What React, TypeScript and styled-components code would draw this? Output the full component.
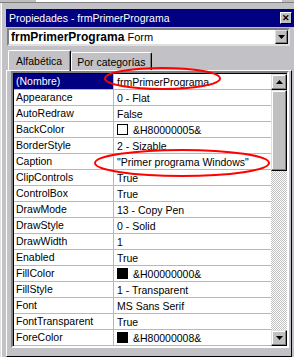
import React from "react";
import styled, { createGlobalStyle } from "styled-components";

type Prop = {
    name: string;
    value: string;
    swatch?: "white" | "black";
    selected?: boolean;
};

const props: Prop[] = [
    { name: "(Nombre)", value: "frmPrimerPrograma", selected: true },
    { name: "Appearance", value: "0 - Flat" },
    { name: "AutoRedraw", value: "False" },
    { name: "BackColor", value: "&H80000005&", swatch: "white" },
    { name: "BorderStyle", value: "2 - Sizable" },
    { name: "Caption", value: "\"Primer programa Windows\"" },
    { name: "ClipControls", value: "True" },
    { name: "ControlBox", value: "True" },
    { name: "DrawMode", value: "13 - Copy Pen" },
    { name: "DrawStyle", value: "0 - Solid" },
    { name: "DrawWidth", value: "1" },
    { name: "Enabled", value: "True" },
    { name: "FillColor", value: "&H00000000&", swatch: "black" },
    { name: "FillStyle", value: "1 - Transparent" },
    { name: "Font", value: "MS Sans Serif" },
    { name: "FontTransparent", value: "True" },
    { name: "ForeColor", value: "&H80000008&", swatch: "black" },
];

const Arrow = ({ up }: { up?: boolean }) => (
    <svg width="7" height="4" viewBox="0 0 7 4">
        <polygon points={up ? "3.5,0 7,4 0,4" : "0,0 7,0 3.5,4"} fill="#000" />
    </svg>
);

export default function App() {
    return (
        <>
            <GlobalStyle />
            <Screen>
                <TopStrip />
                <Frame>
                    <TitleBar>
                        <span>Propiedades - frmPrimerPrograma</span>
                        <CloseButton>✕</CloseButton>
                    </TitleBar>
                    <Combo>
                        <ComboText>
                            <b>frmPrimerPrograma</b> Form
                        </ComboText>
                        <SmallButton>
                            <Arrow />
                        </SmallButton>
                    </Combo>
                    <TabStrip>
                        <Tab $active>Alfabética</Tab>
                        <Tab>Por categorías</Tab>
                    </TabStrip>
                    <Panel>
                        <Grid>
                            <Rows>
                                {props.map((p) => (
                                    <Row key={p.name}>
                                        <NameCell $selected={p.selected}>{p.name}</NameCell>
                                        <ValueCell>
                                            {p.swatch && <Swatch $color={p.swatch} />}
                                            {p.value}
                                        </ValueCell>
                                    </Row>
                                ))}
                            </Rows>
                            <ScrollBar>
                                <ScrollButton>
                                    <Arrow up />
                                </ScrollButton>
                                <Thumb />
                                <Track />
                                <ScrollButton>
                                    <Arrow />
                                </ScrollButton>
                            </ScrollBar>
                        </Grid>
                    </Panel>
                </Frame>
                <Marks width="294" height="357" viewBox="0 0 294 357">
                    <ellipse cx="162.5" cy="78.5" rx="57.5" ry="10.5" fill="none" stroke="#ff0000" strokeWidth="2" />
                    <ellipse cx="182" cy="163" rx="87" ry="13" fill="none" stroke="#ff0000" strokeWidth="2" />
                </Marks>
            </Screen>
        </>
    );
}

const GlobalStyle = createGlobalStyle`
  body {
    margin: 0;
    background: #c0c0c0;
    font-family: "Liberation Sans", Arial, sans-serif;
  }
`;

const Screen = styled.div`
  position: relative;
  width: 294px;
  height: 357px;
  overflow: hidden;
  background: #c2c2c6;
`;

const TopStrip = styled.div`
  height: 3px;
  background: linear-gradient(to right, #c0c0c0 0 36px, #ffffff 36px 282px, #c0c0c0 282px);
  border-bottom: 1px solid #808080;
  box-sizing: border-box;
`;

const Frame = styled.div`
  display: flex;
  flex-direction: column;
  height: 354px;
  box-sizing: border-box;
  padding: 6px 0 0 5px;
  border-left: 1px solid #dfdfdf;
  box-shadow: inset 1px 0 0 #ffffff;
`;

const TitleBar = styled.div`
  display: flex;
  align-items: center;
  justify-content: space-between;
  height: 18px;
  padding: 0 2px 0 3px;
  background: #000080;
  color: #ffffff;
  font-size: 10.5px;
`;

const CloseButton = styled.div`
  display: flex;
  align-items: center;
  justify-content: center;
  width: 12px;
  height: 12px;
  background: #c0c0c0;
  color: #000;
  font-size: 9px;
  font-weight: bold;
  border: 1px solid;
  border-color: #ffffff #000000 #000000 #ffffff;
  box-sizing: border-box;
`;

const Combo = styled.div`
  display: flex;
  align-items: center;
  justify-content: space-between;
  margin: 1px 4px 0 1px;
  height: 18px;
  box-sizing: border-box;
  background: #ffffff;
  border: 2px solid;
  border-color: #808080 #dfdfdf #dfdfdf #808080;
  padding: 0 0 0 2px;
`;

const ComboText = styled.div`
  font-size: 11px;
  color: #000;

  b {
    font-size: 12px;
  }
`;

const SmallButton = styled.div`
  display: flex;
  align-items: center;
  justify-content: center;
  width: 13px;
  height: 14px;
  box-sizing: border-box;
  background: #c0c0c0;
  border: 1px solid;
  border-color: #dfdfdf #000000 #000000 #dfdfdf;
  box-shadow: inset -1px -1px 0 #808080;
`;

const TabStrip = styled.div`
  display: flex;
  align-items: flex-end;
  height: 21px;
  margin-top: 3px;
  padding-left: 2px;
`;

const Tab = styled.div<{ $active?: boolean }>`
  display: flex;
  align-items: center;
  box-sizing: border-box;
  height: ${(p) => (p.$active ? "21px" : "18px")};
  margin-bottom: ${(p) => (p.$active ? "-1px" : "0")};
  padding: 0 ${(p) => (p.$active ? "8px 0 7px" : "6px 0 5px")};
  font-size: 10.5px;
  color: #000;
  background: inherit;
  border-top: 1px solid #ffffff;
  border-left: 1px solid #ffffff;
  border-right: 1px solid #000000;
  box-shadow: inset -1px 0 0 #808080;
  border-radius: 2px 2px 0 0;
  position: relative;
  z-index: ${(p) => (p.$active ? 1 : 0)};
`;

const Panel = styled.div`
  flex: 1;
  margin-right: 2px;
  padding: 0 2px 3px 4px;
  border-top: 1px solid #ffffff;
  border-left: 1px solid #ffffff;
  border-right: 1px solid #000000;
  border-bottom: 1px solid #000000;
  display: flex;
  flex-direction: column;
`;

const Grid = styled.div`
  display: flex;
  margin-top: 0;
  border: 2px solid;
  border-color: #808080 #ffffff #ffffff #808080;
  box-shadow: inset 1px 1px 0 #000000;
  padding: 1px 0 0 1px;
  background: #ffffff;
  font-size: 10.5px;
  color: #000;
`;

const Rows = styled.div`
  flex: 1;
`;

const Row = styled.div`
  display: flex;
  height: 16px;
  box-sizing: border-box;
  border-bottom: 1px solid #b8b8b8;
`;

const NameCell = styled.div<{ $selected?: boolean }>`
  width: 100px;
  box-sizing: border-box;
  padding-left: 2px;
  line-height: 15px;
  border-right: 1px solid #b8b8b8;
  background: ${(p) => (p.$selected ? "#000080" : "#ffffff")};
  color: ${(p) => (p.$selected ? "#ffffff" : "#000000")};
  white-space: nowrap;
  overflow: hidden;
`;

const ValueCell = styled.div`
  flex: 1;
  display: flex;
  align-items: center;
  gap: 5px;
  padding-left: 3px;
  white-space: nowrap;
  overflow: hidden;
`;

const Swatch = styled.span<{ $color: "white" | "black" }>`
  width: 11px;
  height: 11px;
  box-sizing: border-box;
  background: ${(p) => (p.$color === "white" ? "#ffffff" : "#000000")};
  border: 1px solid #000000;
`;

const ScrollBar = styled.div`
  display: flex;
  flex-direction: column;
  width: 16px;
  background: #c0c0c0;
`;

const ScrollButton = styled.div`
  display: flex;
  align-items: center;
  justify-content: center;
  height: 16px;
  box-sizing: border-box;
  background: #c0c0c0;
  border: 1px solid;
  border-color: #dfdfdf #000000 #000000 #dfdfdf;
  box-shadow: inset -1px -1px 0 #808080, inset 1px 1px 0 #ffffff;
`;

const Thumb = styled(ScrollButton)`
  height: 81px;
`;

const Track = styled.div`
  flex: 1;
  background: repeating-conic-gradient(#ffffff 0 25%, #c0c0c0 0 50%) 0 0 / 2px 2px;
`;

const Marks = styled.svg`
  position: absolute;
  left: 0;
  top: 0;
  pointer-events: none;
`;
